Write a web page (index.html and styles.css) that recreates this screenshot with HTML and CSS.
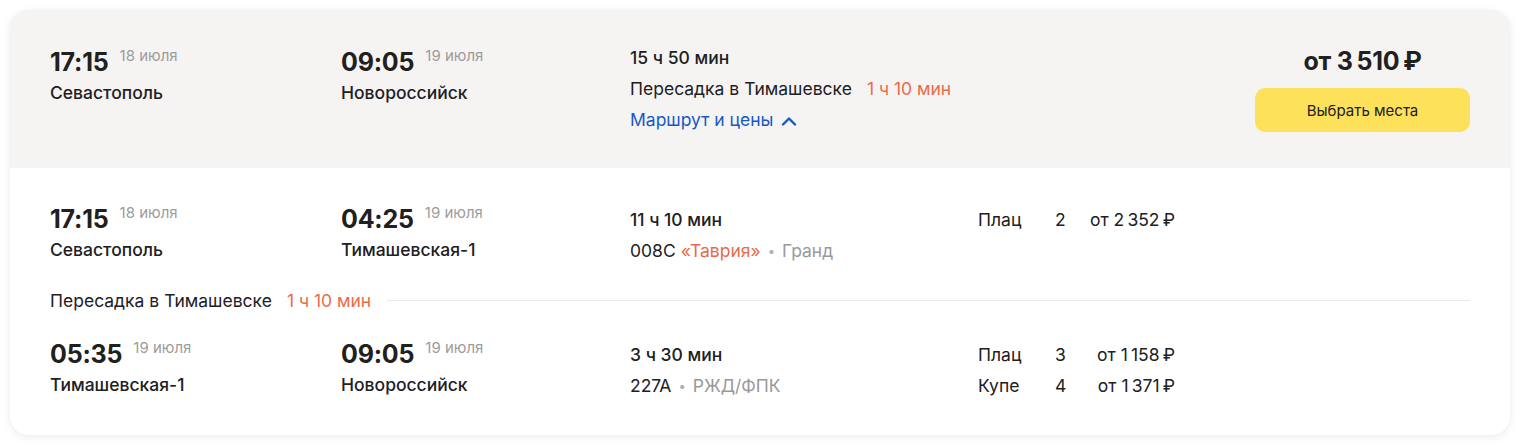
FILE: index.html
```html
<!DOCTYPE html>
<html lang="ru">
<head>
<meta charset="utf-8">
<title>Маршрут</title>
<link rel="stylesheet" href="styles.css">
</head>
<body>
<div class="card">
  <div class="summary">
    <div class="point">
      <div class="time-line"><span class="time">17:15</span><span class="date">18 июля</span></div>
      <div class="city">Севастополь</div>
    </div>
    <div class="point">
      <div class="time-line"><span class="time">09:05</span><span class="date">19 июля</span></div>
      <div class="city">Новороссийск</div>
    </div>
    <div class="info">
      <div class="duration">15 ч 50 мин</div>
      <div class="line">Пересадка в Тимашевске<span class="wait">1 ч 10 мин</span></div>
      <div class="line link"><span>Маршрут и цены</span><svg class="chev" width="16" height="10" viewBox="0 0 16 10"><path d="M2 8.5 L8 2.5 L14 8.5" fill="none" stroke="currentColor" stroke-width="2.4" stroke-linecap="round" stroke-linejoin="round"/></svg></div>
    </div>
    <div class="buy">
      <div class="price">от 3&#8201;510&#8201;₽</div>
      <button class="btn">Выбрать места</button>
    </div>
  </div>
  <div class="details">
    <div class="segment">
      <div class="point">
        <div class="time-line"><span class="time">17:15</span><span class="date">18 июля</span></div>
        <div class="city">Севастополь</div>
      </div>
      <div class="point">
        <div class="time-line"><span class="time">04:25</span><span class="date">19 июля</span></div>
        <div class="city">Тимашевская-1</div>
      </div>
      <div class="info">
        <div class="duration">11 ч 10 мин</div>
        <div class="line"><span>008С</span><span class="brand">«Таврия»</span><span class="dot">•</span><span class="muted">Гранд</span></div>
      </div>
      <div class="classes">
        <div class="cls"><span class="cname">Плац</span><span class="cnum">2</span><span class="cprice">от 2&#8201;352&#8201;₽</span></div>
      </div>
    </div>
    <div class="transfer">
      <span>Пересадка в Тимашевске</span><span class="wait">1 ч 10 мин</span><span class="rule"></span>
    </div>
    <div class="segment">
      <div class="point">
        <div class="time-line"><span class="time">05:35</span><span class="date">19 июля</span></div>
        <div class="city">Тимашевская-1</div>
      </div>
      <div class="point">
        <div class="time-line"><span class="time">09:05</span><span class="date">19 июля</span></div>
        <div class="city">Новороссийск</div>
      </div>
      <div class="info">
        <div class="duration">3 ч 30 мин</div>
        <div class="line"><span>227А</span><span class="dot">•</span><span class="muted">РЖД/ФПК</span></div>
      </div>
      <div class="classes">
        <div class="cls"><span class="cname">Плац</span><span class="cnum">3</span><span class="cprice">от 1&#8201;158&#8201;₽</span></div>
        <div class="cls"><span class="cname">Купе</span><span class="cnum">4</span><span class="cprice">от 1&#8201;371&#8201;₽</span></div>
      </div>
    </div>
  </div>
</div>
</body>
</html>
```

FILE: styles.css
```css
* { box-sizing: border-box; }
html, body { margin: 0; background: #fff; }
body {
  padding: 10px 11px 10px 10px;
  font-family: "Inter", "Roboto", "Liberation Sans", sans-serif;
  color: #21201f;
  font-size: 17.5px;
}
.card {
  width: 1500px;
  height: 425px;
  border-radius: 18px;
  background: #fff;
  box-shadow: 0 2px 8px rgba(0,0,0,0.08), 0 0 1px rgba(0,0,0,0.06);
  overflow: hidden;
}
.summary {
  background: #f5f4f2;
  height: 158px;
  display: grid;
  grid-template-columns: 291px 289px 1fr 215px;
  padding: 36px 40px 0 40px;
}
.point { display: flex; flex-direction: column; }
.time-line { display: flex; align-items: flex-start; height: 32px; }
.time { font-size: 25px; font-weight: 700; line-height: 32px; letter-spacing: -0.2px; }
.date { font-size: 15px; color: #9c9c9c; margin-left: 11px; line-height: 16px; margin-top: 2px; }
.city { font-size: 17.5px; line-height: 22px; margin-top: 4px; font-weight: 500; }
.info { display: flex; flex-direction: column; padding-top: 1px; }
.duration { font-size: 17.5px; font-weight: 500; line-height: 22px; height: 31px; }
.line { font-size: 17.5px; line-height: 22px; height: 31px; display: flex; align-items: flex-start; white-space: nowrap; }
.wait { color: #ec6a4a; margin-left: 15px; }
.link { color: #1658c8; align-items: center; height: 22px; }
.chev { margin-left: 8px; margin-top: 1px; }
.buy { display: flex; flex-direction: column; align-items: stretch; margin-top: -1px; }
.price { text-align: center; font-size: 25px; font-weight: 700; line-height: 32px; height: 43px; letter-spacing: -0.2px; }
.btn {
  height: 44px;
  border: none;
  border-radius: 10px;
  background: #fde15a;
  font-family: inherit;
  font-size: 15px;
  color: #21201f;
}
.details { padding: 35px 40px 0 40px; }
.segment {
  display: grid;
  grid-template-columns: 291px 289px 348px 1fr;
  height: 84px;
}
.details .info { padding-top: 6px; }
.brand { color: #e86a4c; margin-left: 5px; }
.dot { color: #b0b0b0; margin: 0 7px; font-size: 13px; }
.muted { color: #999; }
.classes { display: flex; flex-direction: column; padding-top: 6px; }
.cls { display: grid; grid-template-columns: 77px 20px 100px; height: 31px; line-height: 22px; font-size: 17.5px; }
.cprice { text-align: right; }
.transfer {
  display: flex;
  align-items: center;
  height: 55px;
  padding-bottom: 20px;
  margin-top: -4px;
  font-size: 17.5px;
}
.transfer .wait { margin-left: 15px; }
.rule { flex: 1; height: 1px; background: #e9e8e6; margin-left: 16px; }
```
